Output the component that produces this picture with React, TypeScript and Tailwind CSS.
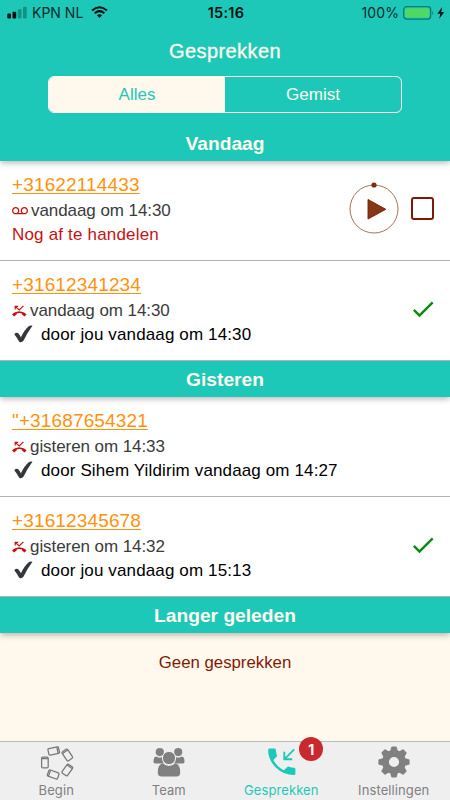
import type { ReactNode } from "react";
import { MdCheck, MdVoicemail } from "react-icons/md";

interface Call {
  number: string;
  time: string;
  kind: "voicemail" | "missed";
  handledBy?: string;
  checked?: boolean;
}

const TODAY: Call[] = [
  { number: "+31622114433", time: "vandaag om 14:30", kind: "voicemail" },
  { number: "+31612341234", time: "vandaag om 14:30", kind: "missed", handledBy: "door jou vandaag om 14:30", checked: true },
];

const YESTERDAY: Call[] = [
  { number: "\"+31687654321", time: "gisteren om 14:33", kind: "missed", handledBy: "door Sihem Yildirim vandaag om 14:27" },
  { number: "+31612345678", time: "gisteren om 14:32", kind: "missed", handledBy: "door jou vandaag om 15:13", checked: true },
];

function StatusBar() {
  return (
    <div className="grid grid-cols-3 items-center h-[25px] pl-[7px] pr-[5px] text-[14px] text-[#062b27] font-['Inter',sans-serif]">
      <div className="flex items-center">
        <svg width="21" height="13" viewBox="0 0 21 13" fill="#04110f">
          <rect x="0.3" y="7.5" width="3.7" height="5" rx="1" />
          <rect x="5.5" y="5.7" width="3.7" height="6.8" rx="1" />
          <rect x="10.8" y="3.3" width="3.7" height="9.2" rx="1" opacity="0.3" />
          <rect x="16" y="0.8" width="3.7" height="11.7" rx="1" opacity="0.3" />
        </svg>
        <span className="ml-[4px] whitespace-nowrap">KPN NL</span>
        <svg className="ml-[8px]" width="17" height="13" viewBox="0 0 17 13" fill="none" stroke="#04110f" strokeWidth="2.1">
          <path d="M1 4.5Q8.5 -2 16 4.5" />
          <path d="M3.7 7.3Q8.5 3 13.3 7.3" />
          <path d="M5.9 9.3Q8.5 7 11.1 9.3L8.5 12Z" fill="#04110f" stroke="none" />
        </svg>
      </div>
      <span className="text-center text-[14.5px] font-semibold text-[#04110f] tracking-[0.25px]">15:16</span>
      <div className="flex items-center justify-end">
        <span className="tracking-[0.1px]">100%</span>
        <svg className="ml-[4px]" width="42" height="14" viewBox="0 0 42 14">
          <rect x="0.7" y="0.7" width="27" height="12.4" rx="3" fill="none" stroke="#0f776d" strokeWidth="1.2" />
          <rect x="2.2" y="2.2" width="24" height="9.4" rx="1.6" fill="#4cd964" />
          <path d="M29.3 5Q31.2 7 29.3 9Z" fill="#0f776d" />
          <path d="M39.2 1L34.3 7.8H37.3L36.3 12.8L41.2 6.1H38.2Z" fill="#04110f" />
        </svg>
      </div>
    </div>
  );
}

function SectionTitle({ children }: { children: ReactNode }) {
  return (
    <div className="relative h-9 pt-[2px] flex items-center justify-center bg-[#1ec8b8] text-[#fff9ed] text-[19.2px] font-bold shadow-[0_2px_6px_rgba(0,0,0,0.28)] [clip-path:inset(0_0_-10px_0)]">
      {children}
    </div>
  );
}

function MissedIcon() {
  return (
    <svg className="shrink-0" width="15" height="13" viewBox="0 0 15 13" fill="none" stroke="#c81212">
      <path d="M3.2 4.4V1.4H6.2M3.4 1.6L7.2 4.9L11.4 0.9" strokeWidth="1.2" />
      <path d="M1.3 9.6Q7.3 4.6 13.3 9.6" strokeWidth="1.8" />
      <path d="M0 9.5L2.1 11.4L4.6 9.4V7.2L2.3 7.7ZM14.6 9.5L12.5 11.4L10 9.4V7.2L12.3 7.7Z" fill="#c81212" stroke="none" />
    </svg>
  );
}

function PlayButton() {
  return (
    <svg width="50" height="54" viewBox="0 0 50 54" fill="none">
      <circle cx="25" cy="28" r="24" stroke="#a5735b" strokeWidth="1" />
      <circle cx="25" cy="4" r="2.6" fill="#7d2d0e" />
      <path d="M19 18.5V38L36.8 28.3Z" fill="#843813" stroke="#7a1707" strokeWidth="0.9" />
    </svg>
  );
}

function CallRow({ call }: { call: Call }) {
  return (
    <div className="h-[100px] flex justify-between bg-white border-b border-[#b3b3b3] pl-3">
      <div className="pt-[12px] whitespace-nowrap">
        <div className="h-[26px] leading-6 text-[19px] tracking-[0.14px] text-[#ff920d] underline decoration-1 underline-offset-2">
          {call.number}
        </div>
        <div className="flex items-center h-6 text-[17px] tracking-[-0.07px] text-[#3b3b3b]">
          {call.kind === "voicemail" ? <MdVoicemail size={16} className="mr-[3px] text-[#c81212]" /> : <MissedIcon />}
          <span className={call.kind === "missed" ? "ml-[3px]" : ""}>{call.time}</span>
        </div>
        {call.handledBy ? (
          <div className="flex items-center h-6 text-[17px] tracking-[0.13px] text-black">
            <svg className="ml-[2px] mr-[8px] mb-[2px]" width="19" height="18" viewBox="0 0 19 18" fill="#34373b">
              <path d="M0.3 9.2Q1.8 7.2 4 7.9Q5.8 9.8 6.9 12.2Q10.4 4.7 15 0.9Q16.8 0.2 18.5 0.8Q13.4 7.6 9.6 15.4Q7.6 18.2 5.2 16.7Q3.2 12.9 0.3 9.2Z" />
            </svg>
            {call.handledBy}
          </div>
        ) : (
          <div className="flex items-center h-6 text-[17px] tracking-[0.18px] text-[#c81212]">Nog af te handelen</div>
        )}
      </div>
      <div className="flex items-center pr-[13px]">
        {call.kind === "voicemail" && (
          <>
            <div className="mr-[12px] mb-[6px]"><PlayButton /></div>
            <span className="mr-[3px] mb-[4px] w-[23px] h-[23px] rounded-[3px] border-2 border-[#7f1905]" />
          </>
        )}
        {call.checked && <MdCheck size={28} className="mb-[4px] text-[#0a8b12]" />}
      </div>
    </div>
  );
}

const PHONES = [
  "translate(19.7 5) rotate(78)",
  "translate(33.3 9) rotate(-34)",
  "translate(33.3 24) rotate(36)",
  "translate(19.2 28.5) rotate(-70)",
  "translate(10.9 16.5)",
];

function BeginIcon() {
  return (
    <svg width="45" height="36" viewBox="0 0 45 36" fill="none" stroke="#777" strokeWidth="1.25">
      {PHONES.map((transform) => (
        <g key={transform} transform={transform}>
          <rect x="-3.3" y="-5.4" width="6.6" height="10.8" rx="1.2" />
          <path d="M-3 -3.9H3" />
        </g>
      ))}
    </svg>
  );
}

function TeamIcon() {
  return (
    <svg className="mb-[3px] ml-px" width="32" height="32" viewBox="0 0 32 32" fill="#808080">
      <circle cx="6.8" cy="5.1" r="4.1" />
      <circle cx="25.2" cy="5.1" r="4.1" />
      <path d="M0.5 15Q0.5 9.8 3 9.6Q6 11.4 9.3 10.1L9.6 14Q10 15.3 11 16.5H3Q0.5 16.5 0.5 15Z" />
      <path d="M31.5 15Q31.5 9.8 29 9.6Q26 11.4 22.7 10.1L22.4 14Q22 15.3 21 16.5H29Q31.5 16.5 31.5 15Z" />
      <circle cx="16" cy="11" r="6.6" stroke="#efefef" />
      <path d="M4.8 25.5Q4.8 17.2 9.7 16.6Q16 21.2 22.3 16.6Q27.2 17.2 27.2 25.5Q27.2 29.5 23.5 29.5H8.5Q4.8 29.5 4.8 25.5Z" />
    </svg>
  );
}

function CallbackIcon() {
  return (
    <svg className="mb-[5px] ml-[2px]" width="28" height="28" viewBox="0 0 28 28" fill="#1ec8b8">
      <path d="M1.5 0.5H6.3Q7.6 0.5 7.8 1.8Q8 4.5 8.8 6.9Q9.2 8.1 8.4 8.9L5.4 11.9Q9 18.9 16 22.2L19 19.2Q19.9 18.3 21 18.7Q23.6 19.6 26 19.7Q27.4 19.8 27.4 21.1V25.7Q27.4 27.1 26 27.1Q15.5 27.1 7.8 19.5Q0.1 11.8 0.1 2Q0.1 0.5 1.5 0.5Z" />
      <path d="M26.2 1.4L16.8 10.8M16.3 3.8V11.2H24.2" fill="none" stroke="#1ec8b8" strokeWidth="1.9" />
    </svg>
  );
}

function GearIcon() {
  return (
    <svg className="mb-[4px] ml-px" width="32" height="32" viewBox="-16 -16 32 32" fill="#808080">
      <circle r="8.5" fill="none" stroke="#808080" strokeWidth="6.8" />
      {[0, 45, 90, 135, 180, 225, 270, 315].map((angle) => (
        <path key={angle} d="M-4 -10L-2.8 -14.8Q-2.6 -15.6 -1.8 -15.6H1.8Q2.6 -15.6 2.8 -14.8L4 -10Z" transform={`rotate(${angle})`} />
      ))}
    </svg>
  );
}

function Tab({ label, active, children }: { label: string; active?: boolean; children: ReactNode }) {
  return (
    <div className={`flex flex-col items-center pt-[4px] text-[13px] tracking-[0.1px] ${active ? "text-[#1ec8b8]" : "text-[#808080]"}`}>
      <div className="relative h-9 flex items-center justify-center">{children}</div>
      <span className="leading-[16px]">{label}</span>
    </div>
  );
}

export default function App() {
  return (
    <div className="w-[450px] h-[800px] flex flex-col overflow-hidden bg-[#fff9ed] font-['Liberation_Sans',Arial,sans-serif]">
      <header className="h-[125px] shrink-0 bg-[#1ec8b8] text-[#fff9ed]">
        <StatusBar />
        <h1 className="h-[51px] flex items-center justify-center text-[20px] tracking-[0.42px] [-webkit-text-stroke:0.3px_#fff9ed]">Gesprekken</h1>
        <div className="mx-12 h-[37px] grid grid-cols-2 rounded-[6px] border border-[#fff9ed] overflow-hidden text-[17px]">
          <div className="flex items-center justify-center bg-[#fff9ed] text-[#1ec8b8]">Alles</div>
          <div className="flex items-center justify-center">Gemist</div>
        </div>
      </header>

      <main className="flex-1">
        <SectionTitle>Vandaag</SectionTitle>
        {TODAY.map((call) => <CallRow key={call.number} call={call} />)}
        <SectionTitle>Gisteren</SectionTitle>
        {YESTERDAY.map((call) => <CallRow key={call.number} call={call} />)}
        <SectionTitle>Langer geleden</SectionTitle>
        <p className="pt-[18px] text-center text-[16.8px] leading-6 text-[#7f1905]">Geen gesprekken</p>
      </main>

      <nav className="h-[59px] shrink-0 grid grid-cols-4 bg-[#efefef] border-t border-[#b8bdb6] font-['Inter',sans-serif]">
        <Tab label="Begin"><BeginIcon /></Tab>
        <Tab label="Team"><TeamIcon /></Tab>
        <Tab label="Gesprekken" active>
          <CallbackIcon />
          <span className="absolute left-[33px] -top-[9px] w-6 h-6 rounded-full bg-[#c9282d] flex items-center justify-center text-[14px] font-bold text-white">
            1
          </span>
        </Tab>
        <Tab label="Instellingen"><GearIcon /></Tab>
      </nav>
    </div>
  );
}
